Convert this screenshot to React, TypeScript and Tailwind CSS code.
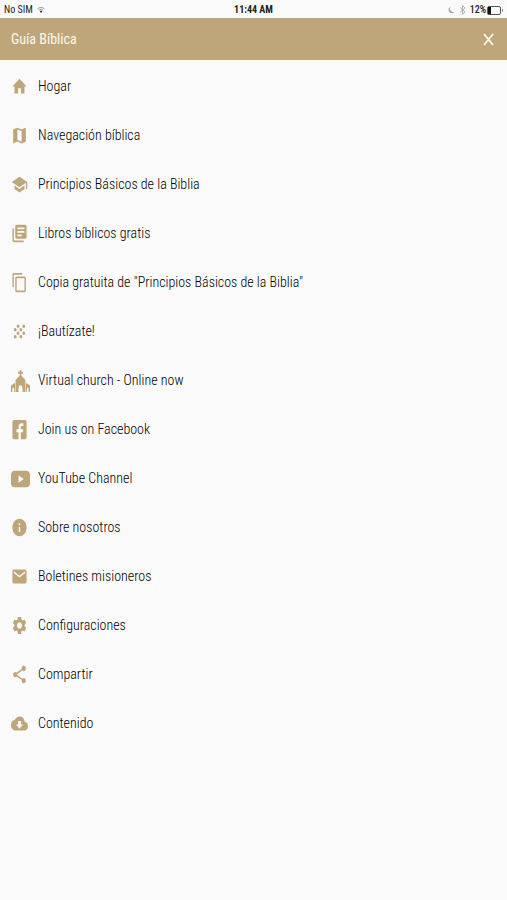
import React from "react";
import {
  MdCloudDownload,
  MdContentCopy,
  MdEmail,
  MdGrain,
  MdHome,
  MdInfo,
  MdLibraryBooks,
  MdMap,
  MdSchool,
  MdSettings,
  MdShare,
} from "react-icons/md";

type IconProps = {
  className?: string;
  preserveAspectRatio?: string;
};

function ChurchIcon(props: IconProps) {
  return (
    <svg viewBox="0 0 24 24" fill="currentColor" aria-hidden="true" {...props}>
      <path d="M11 0h2v2h2.200v2H13v2l5.200 5V24h-3.700v-4.500a2.500 3 0 0 0-5 0V24H5.800V11L11 6V4H8.800V2H11z" />
      <path d="M5.200 14V24H4v-3a1.100 1.600 0 0 0-2.200 0V24H0v-7zM18.800 14V24H20v-3a1.100 1.600 0 0 1 2.200 0V24H24v-7z" />
    </svg>
  );
}

function FacebookIcon(props: IconProps) {
  return (
    <svg viewBox="0 0 24 24" fill="currentColor" aria-hidden="true" {...props}>
      <path d="M4 1h16a2 2 0 0 1 2 2v18a2 2 0 0 1-2 2h-6.200v-8h3l.4-3.200h-3.400V9.800c0-1.200.6-1.800 1.800-1.800h1.900V4.900h-2.600c-2.900 0-4.300 1.600-4.300 4.500v2.400H7.800V15h2.800v8H4a2 2 0 0 1-2-2V3a2 2 0 0 1 2-2z" />
    </svg>
  );
}

function YoutubeIcon(props: IconProps) {
  return (
    <svg viewBox="0 0 24 24" fill="currentColor" aria-hidden="true" {...props}>
      <path
        fillRule="evenodd"
        d="M5 3h14c3.200 0 5 1.800 5 4.500v9c0 2.700-1.800 4.500-5 4.500H5c-3.200 0-5-1.800-5-4.500v-9C0 4.800 1.800 3 5 3zm4.500 5v8l6.500-4z"
      />
    </svg>
  );
}

const regular = "w-[17px] h-[21px]";
const wide = "w-[19px] h-[22px]";

const items = [
  { label: "Hogar", icon: MdHome, size: regular },
  { label: "Navegación bíblica", icon: MdMap, size: regular },
  { label: "Principios Básicos de la Biblia", icon: MdSchool, size: regular },
  { label: "Libros bíblicos gratis", icon: MdLibraryBooks, size: regular },
  {
    label: 'Copia gratuita de "Principios Básicos de la Biblia"',
    icon: MdContentCopy,
    size: regular,
  },
  { label: "¡Bautízate!", icon: MdGrain, size: regular },
  { label: "Virtual church - Online now", icon: ChurchIcon, size: wide },
  { label: "Join us on Facebook", icon: FacebookIcon, size: regular },
  { label: "YouTube Channel", icon: YoutubeIcon, size: wide },
  { label: "Sobre nosotros", icon: MdInfo, size: regular },
  { label: "Boletines misioneros", icon: MdEmail, size: regular },
  { label: "Configuraciones", icon: MdSettings, size: regular },
  { label: "Compartir", icon: MdShare, size: regular },
  { label: "Contenido", icon: MdCloudDownload, size: regular },
];

function StatusBar() {
  return (
    <div className="grid grid-cols-3 items-center h-[18px] px-1 pt-0.5 text-[10px] leading-none text-[#222]">
      <div className="flex items-center gap-1">
        <span>No SIM</span>
        <svg className="w-2 h-2" viewBox="0 0 16 16" fill="none" stroke="#777">
          <path d="M1 6c4-4 10-4 14 0M3.500 8.500c2.500-2.500 6.500-2.500 9 0" strokeWidth="1.500" />
          <path d="M5.500 10.500c1.500-1.200 3.500-1.200 5 0L8 14z" fill="#222" stroke="none" />
        </svg>
      </div>
      <span className="text-center font-bold">11:44 AM</span>
      <div className="flex items-center justify-end gap-1">
        <svg className="w-[7px] h-2" viewBox="0 0 14 16" fill="#aaa">
          <path d="M5 1C2 7 6 13 13 12 8 17 1 14 1 8c0-3 1.500-5.500 4-7z" />
        </svg>
        <svg className="w-[7px] h-2.5" viewBox="0 0 14 20" fill="none" stroke="#999" strokeWidth="1.500">
          <path d="M2 5l10 9-5 5V1l5 5-10 9" />
        </svg>
        <div className="flex items-center gap-px">
          <span className="font-medium">12%</span>
          <svg className="w-4 h-[9px]" viewBox="0 0 16 9" fill="none">
            <rect x="0.500" y="0.500" width="13" height="8" rx="1.500" stroke="#555" />
            <path d="M1 1h3v7H1z" fill="#111" />
            <path d="M15 3c1 .5 1 2.500 0 3z" fill="#555" />
          </svg>
        </div>
      </div>
    </div>
  );
}

function App() {
  return (
    <div className="min-h-screen bg-[#fafafa] text-[#222] font-['Roboto_Condensed',Roboto,sans-serif]">
      <StatusBar />
      <header className="flex items-center justify-between h-[42px] pl-[11px] pr-3 bg-[#bfa67a] text-[#fdf8ee]">
        <h1 className="text-[14px]">Guía Bíblica</h1>
        <button type="button" aria-label="Cerrar" className="flex">
          <svg
            className="w-[13px] h-[15px]"
            viewBox="0 0 13 15"
            fill="none"
            stroke="currentColor"
            strokeWidth="1.800"
          >
            <path d="M2 2l9 11M11 2L2 13" />
          </svg>
        </button>
      </header>
      <nav className="pt-0.5">
        <ul>
          {items.map(({ label, icon: Icon, size }) => (
            <li key={label}>
              <a href="#" className="flex items-center h-[49px] pl-[11px]">
                <span className="flex w-[27px] text-[#bfa67a]">
                  <Icon className={size} preserveAspectRatio="none" />
                </span>
                <span className="text-[14px] font-light text-black">{label}</span>
              </a>
            </li>
          ))}
        </ul>
      </nav>
    </div>
  );
}

export default App;
